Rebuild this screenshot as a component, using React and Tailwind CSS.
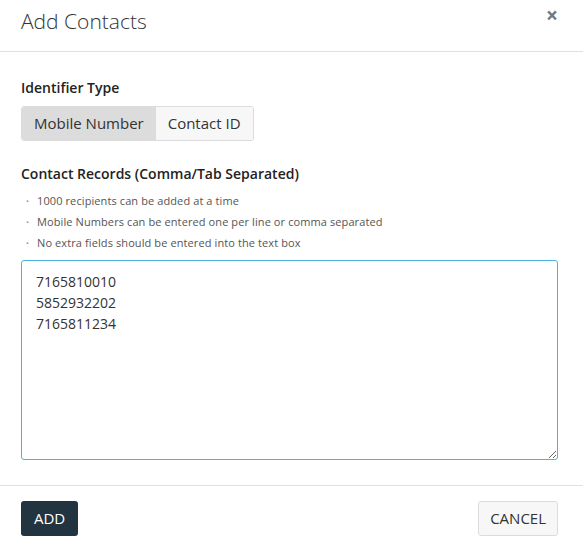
import React from "react";

export default function App() {
  return (
    <div className="w-[583px] h-[544px] bg-white text-[#333] overflow-hidden" style={{ fontFamily: '"Open Sans", sans-serif' }}>
      <div className="h-[52px] border-b border-[#e0e0e0] flex items-start justify-between pl-[21px] pr-[25px]">
        <h1 className="text-[21px] font-light leading-[28px] mt-[7px] text-[#333]">Add Contacts</h1>
        <span className="text-[21px] font-bold leading-[20px] mt-[5px] text-[#777]">×</span>
      </div>
      <div className="pl-[21px] pr-[25px] pt-[26px]">
        <div className="text-[14px] font-semibold leading-[20px] text-[#222]">Identifier Type</div>
        <div className="mt-[8px] inline-flex border border-[#dcdcdc] rounded-[3px] overflow-hidden h-[35px] text-[15px]">
          <button className="pl-[12px] pr-[11px] bg-[#dcdcdc] text-[#333]">Mobile Number</button>
          <button className="px-[12px] bg-[#f7f7f7] text-[#333] border-l border-[#dcdcdc]">Contact ID</button>
        </div>
        <div className="mt-[23px] text-[14px] font-semibold leading-[20px] text-[#222]">Contact Records (Comma/Tab Separated)</div>
        <ul className="mt-[6px] pl-[5px] text-[11px] leading-[21px] text-[#555] tracking-[0.1px]">
          <li className="flex items-center"><span className="w-[11px] text-[8px] text-[#999]">•</span>1000 recipients can be added at a time</li>
          <li className="flex items-center"><span className="w-[11px] text-[8px] text-[#999]">•</span>Mobile Numbers can be entered one per line or comma separated</li>
          <li className="flex items-center"><span className="w-[11px] text-[8px] text-[#999]">•</span>No extra fields should be entered into the text box</li>
        </ul>
        <textarea
          className="mt-[7px] block w-[537px] h-[200px] border border-[#4ab4de] rounded-[3px] px-[14px] py-[10px] text-[14px] leading-[21px] text-[#333] outline-none"
          defaultValue={"7165810010\n5852932202\n7165811234"}
          style={{ fontFamily: '"Open Sans", sans-serif' }}
        />
      </div>
      <div className="mt-[25px] border-t border-[#e0e0e0] flex justify-between pl-[21px] pr-[25px] pt-[15px]">
        <button className="h-[35px] px-[13px] bg-[#213440] text-white text-[15px] rounded-[3px]">ADD</button>
        <button className="h-[35px] px-[11px] bg-[#f7f7f7] border border-[#dcdcdc] text-[#333] text-[15px] rounded-[3px]">CANCEL</button>
      </div>
    </div>
  );
}
